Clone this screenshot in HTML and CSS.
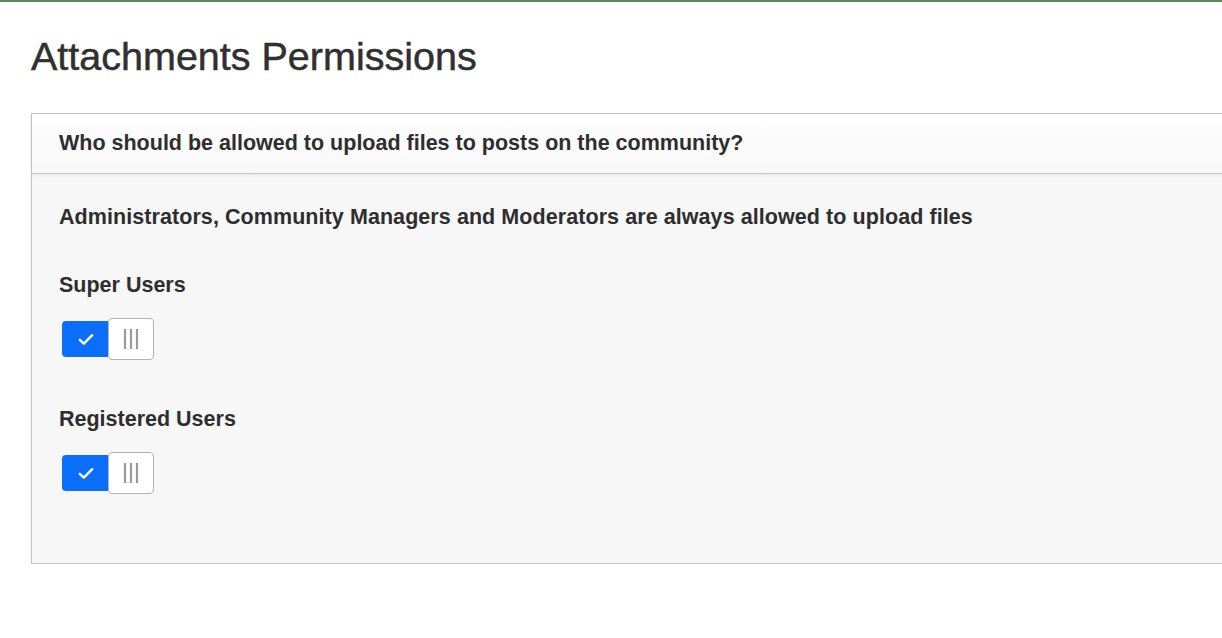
FILE: index.html
```html
<!DOCTYPE html>
<html lang="en">
<head>
<meta charset="utf-8">
<title>Attachments Permissions</title>
<link rel="stylesheet" href="styles.css">
</head>
<body>
<div class="page">
  <h1 class="title">Attachments Permissions</h1>
  <section class="panel">
    <header class="panel-head">Who should be allowed to upload files to posts on the community?</header>
    <div class="panel-body">
      <p class="note">Administrators, Community Managers and Moderators are always allowed to upload files</p>
      <div class="field">
        <div class="label">Super Users</div>
        <div class="toggle">
          <span class="toggle-on"><svg width="16" height="13" viewBox="0 0 16 13"><polyline points="1.8,6.8 5.8,10.6 14.2,2.2" fill="none" stroke="#fff" stroke-width="2.4" stroke-linecap="round" stroke-linejoin="round"/></svg></span>
          <span class="toggle-handle"><svg width="16" height="20" viewBox="0 0 16 20"><path d="M2 0V20M8 0V20M14 0V20" stroke="#9a9a9a" stroke-width="2.2"/></svg></span>
        </div>
      </div>
      <div class="field">
        <div class="label">Registered Users</div>
        <div class="toggle">
          <span class="toggle-on"><svg width="16" height="13" viewBox="0 0 16 13"><polyline points="1.8,6.8 5.8,10.6 14.2,2.2" fill="none" stroke="#fff" stroke-width="2.4" stroke-linecap="round" stroke-linejoin="round"/></svg></span>
          <span class="toggle-handle"><svg width="16" height="20" viewBox="0 0 16 20"><path d="M2 0V20M8 0V20M14 0V20" stroke="#9a9a9a" stroke-width="2.2"/></svg></span>
        </div>
      </div>
    </div>
  </section>
</div>
</body>
</html>
```

FILE: styles.css
```css
html, body {
  margin: 0;
  padding: 0;
  overflow: hidden;
  background: #fff;
}
body {
  border-top: 2px solid #5b8656;
  font-family: "Liberation Sans", Arial, Helvetica, sans-serif;
  color: #333;
}
.page {
  padding: 32px 0 0 31px;
}
.title {
  margin: 0;
  font-size: 39.5px;
  line-height: 44px;
  font-weight: 400;
  color: #303030;
  -webkit-text-stroke: 0.5px #303030;
}
.panel {
  margin: 35px -30px 0 0;
  border: 1px solid #c6c6c6;
  background: #f7f7f7;
  box-shadow: 0 1px 2px rgba(0,0,0,0.08);
}
.panel-head {
  height: 59px;
  display: flex;
  align-items: center;
  padding-left: 27px;
  font-size: 21.5px;
  font-weight: 700;
  color: #2e2e2e;
  background: linear-gradient(#fefefe, #f8f8f8);
  border-bottom: 1px solid #c4c4c4;
  box-shadow: 0 2px 4px rgba(0,0,0,0.06);
  position: relative;
}
.panel-body {
  padding: 30px 0 69px 27px;
}
.note {
  margin: 0;
  font-size: 21.5px;
  line-height: 26px;
  font-weight: 700;
  color: #2e2e2e;
  letter-spacing: 0.07px;
}
.field {
  margin-top: 41.5px;
}
.field + .field {
  margin-top: 45.5px;
}
.label {
  font-size: 21.5px;
  line-height: 26px;
  font-weight: 700;
  color: #2e2e2e;
}
.toggle {
  display: flex;
  align-items: center;
  margin: 20.5px 0 0 3px;
}
.toggle-on {
  width: 46px;
  height: 36px;
  background: #0b6ef8;
  border-radius: 4px 0 0 4px;
  display: flex;
  align-items: center;
  justify-content: center;
}
.toggle-on svg {
  margin-left: 1px;
}
.toggle-handle {
  width: 44px;
  height: 40px;
  background: #fff;
  border: 1px solid #b4b4b4;
  border-radius: 4px;
  display: flex;
  align-items: center;
  justify-content: center;
}
```
